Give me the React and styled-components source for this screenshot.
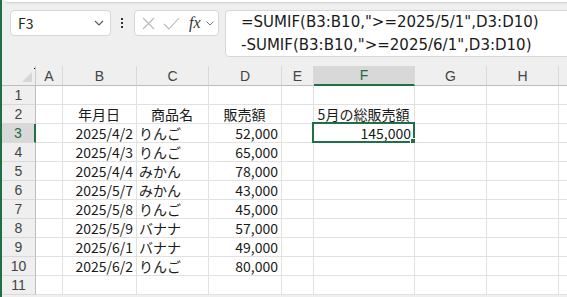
import styled, { createGlobalStyle } from "styled-components";

const GlobalStyle = createGlobalStyle`
  html, body { margin: 0; padding: 0; }
  body { background: #efefef; overflow: hidden; }
`;

const JP = `"Noto Sans CJK JP", "Noto Sans", sans-serif`;

// the last column only peeks in at the right edge, its letter is out of view
const columns = [
  { key: "A", width: 27 },
  { key: "B", width: 74 },
  { key: "C", width: 72 },
  { key: "D", width: 73 },
  { key: "E", width: 32 },
  { key: "F", width: 101 },
  { key: "G", width: 72 },
  { key: "H", width: 72 },
  { key: "I", width: 72, hidden: true },
];

const sales = [
  ["2025/4/2", "りんご", "52,000"],
  ["2025/4/3", "りんご", "65,000"],
  ["2025/4/4", "みかん", "78,000"],
  ["2025/5/7", "みかん", "43,000"],
  ["2025/5/8", "りんご", "45,000"],
  ["2025/5/9", "バナナ", "57,000"],
  ["2025/6/1", "バナナ", "49,000"],
  ["2025/6/2", "りんご", "80,000"],
];

function cellsFor(row) {
  const cells = {};
  if (row === 2) {
    cells.B = { text: "年月日", align: "center" };
    cells.C = { text: "商品名", align: "center" };
    cells.D = { text: "販売額", align: "center" };
    cells.F = { text: "5月の総販売額", align: "center" };
  }
  const item = sales[row - 3];
  if (item) {
    cells.B = { text: item[0], align: "right" };
    cells.C = { text: item[1], align: "left" };
    cells.D = { text: item[2], align: "right" };
  }
  if (row === 3) cells.F = { text: "145,000", align: "right", selected: true };
  return cells;
}

function App() {
  const rows = Array.from({ length: 11 }, (_, i) => i + 1);
  return (
    <Page>
      <GlobalStyle />
      <TopLip />
      <FormulaBar>
        <NameBox>
          <span>F3</span>
          <svg width="10" height="6" viewBox="0 0 10 6">
            <polyline points="1,1 5,5 9,1" fill="none" stroke="#555" strokeWidth="1.1" />
          </svg>
        </NameBox>
        <Kebab>
          <i /><i /><i />
        </Kebab>
        <FuncButtons>
          <svg width="13" height="13" viewBox="0 0 13 13">
            <path d="M1 1 L12 12 M12 1 L1 12" stroke="#b8b8b8" strokeWidth="1.1" />
          </svg>
          <svg width="17" height="13" viewBox="0 0 17 13">
            <polyline points="1,7 6,12 16,1" fill="none" stroke="#b8b8b8" strokeWidth="1.1" />
          </svg>
          <Fx>fx</Fx>
          <svg width="8" height="5" viewBox="0 0 8 5">
            <polyline points="0.5,0.5 4,4 7.5,0.5" fill="none" stroke="#777" strokeWidth="1" />
          </svg>
        </FuncButtons>
        <FormulaBox>
          <div>=SUMIF(B3:B10,"&gt;=2025/5/1",D3:D10)</div>
          <div>-SUMIF(B3:B10,"&gt;=2025/6/1",D3:D10)</div>
        </FormulaBox>
      </FormulaBar>

      <Sheet $cols={columns.map((c) => c.width + "px").join(" ")}>
        <Corner>
          <svg width="10" height="10" viewBox="0 0 10 10">
            <polygon points="10,0 10,10 0,10" fill="#d6d6d6" />
          </svg>
        </Corner>
        {columns.map((c) => (
          <ColHead key={c.key} $active={c.key === "F"}>{c.hidden ? null : c.key}</ColHead>
        ))}
        {rows.map((r) => {
          const cells = cellsFor(r);
          return [
            <RowHead key={"h" + r} $active={r === 3}>{r}</RowHead>,
            ...columns.map((c) => {
              const cell = cells[c.key];
              return (
                <Cell key={c.key + r} $align={cell ? cell.align : "left"}>
                  {cell && cell.text}
                  {cell && cell.selected && (
                    <Selection>
                      <Handle />
                    </Selection>
                  )}
                </Cell>
              );
            }),
          ];
        })}
      </Sheet>
    </Page>
  );
}

export default App;

const Page = styled.div`
  width: 567px;
  height: 297px;
  box-sizing: border-box;
  border-left: 2px solid #1f7045;
  background: #efefef;
  display: flex;
  flex-direction: column;
  overflow: hidden;
  font-family: ${JP};
`;

const TopLip = styled.div`
  height: 2px;
  margin-left: 3px;
  background: #fff;
  border-bottom: 1px solid #d5d5d5;
  border-bottom-left-radius: 6px;
  box-shadow: 0 1px 2px rgba(0, 0, 0, 0.06);
`;

const FormulaBar = styled.div`
  display: flex;
  align-items: flex-start;
  padding: 7px 0 0 8px;
  height: 55px;
  box-sizing: border-box;
`;

const NameBox = styled.div`
  width: 101px;
  height: 26px;
  box-sizing: border-box;
  background: #fff;
  border: 1px solid #d6d6d6;
  border-radius: 4px;
  display: flex;
  align-items: center;
  justify-content: space-between;
  padding: 0 6px 0 7px;
  font-size: 14px;
  color: #222;
`;

const Kebab = styled.div`
  width: 3px;
  margin: 8px 10px 0 10px;
  display: flex;
  flex-direction: column;
  gap: 2px;

  i {
    display: block;
    width: 2px;
    height: 2px;
    background: #333;
  }
`;

const FuncButtons = styled.div`
  width: 85px;
  height: 26px;
  box-sizing: border-box;
  background: #fff;
  border: 1px solid #d6d6d6;
  border-radius: 4px;
  display: flex;
  align-items: center;
  padding: 0 4px 0 7px;
  gap: 8px;
`;

const Fx = styled.span`
  font-family: "Liberation Serif", serif;
  font-style: italic;
  font-size: 16px;
  color: #333;
  margin-left: 1px;
  margin-right: -3px;
`;

const FormulaBox = styled.div`
  flex: 1;
  margin-left: 6px;
  margin-right: -8px;
  height: 47px;
  box-sizing: border-box;
  background: #fff;
  border: 1px solid #d6d6d6;
  border-radius: 4px;
  padding: 0 0 0 15px;
  font-family: "DejaVu Sans", sans-serif;
  font-size: 15px;
  line-height: 23px;
  color: #1a1a1a;
  white-space: nowrap;
`;

const Sheet = styled.div`
  display: grid;
  grid-template-columns: 34px ${(p) => p.$cols};
  grid-auto-rows: 19px;
  grid-template-rows: 20px;
  margin-top: 8px;
  font-size: 14px;
`;

const HeadBase = styled.div`
  box-sizing: border-box;
  background: #efefef;
  color: #444;
  display: flex;
  align-items: center;
  justify-content: center;
  font-family: "Liberation Sans", sans-serif;
  font-size: 14px;
`;

const Corner = styled(HeadBase)`
  border-right: 1px solid #c9c9c9;
  border-bottom: 1px solid #bdbdbd;
  align-items: flex-end;
  justify-content: flex-end;
  padding: 0 3px 3px 0;
  position: relative;

  &::before {
    content: "";
    position: absolute;
    right: 0;
    top: 2px;
    width: 1px;
    height: 1px;
    background: #000;
  }
`;

const ColHead = styled(HeadBase)`
  border-right: 1px solid #d9d9d9;
  border-bottom: ${(p) => (p.$active ? "2px solid #1e7145" : "1px solid #bdbdbd")};
  background: ${(p) => (p.$active ? "#d8d8d8" : "#efefef")};
  color: ${(p) => (p.$active ? "#1e6b41" : "#444")};
`;

const RowHead = styled(HeadBase)`
  border-bottom: 1px solid #d9d9d9;
  border-right: ${(p) => (p.$active ? "2px solid #1e7145" : "1px solid #bdbdbd")};
  background: ${(p) => (p.$active ? "#d8d8d8" : "#efefef")};
  color: ${(p) => (p.$active ? "#1e6b41" : "#444")};
`;

const Cell = styled.div`
  position: relative;
  box-sizing: border-box;
  background: #fff;
  border-right: 1px solid #e1e1e1;
  border-bottom: 1px solid #e1e1e1;
  display: flex;
  align-items: center;
  justify-content: ${(p) =>
    p.$align === "right" ? "flex-end" : p.$align === "center" ? "center" : "flex-start"};
  padding: 0 3px 0 2px;
  color: #1a1a1a;
  white-space: nowrap;
  overflow: visible;
`;

const Selection = styled.div`
  position: absolute;
  left: -2px;
  top: -2px;
  right: -1px;
  bottom: -1px;
  border: 2px solid #1e7145;
  pointer-events: none;
`;

const Handle = styled.div`
  position: absolute;
  right: -4px;
  bottom: -4px;
  width: 5px;
  height: 5px;
  background: #1e7145;
  border: 1px solid #fff;
`;
